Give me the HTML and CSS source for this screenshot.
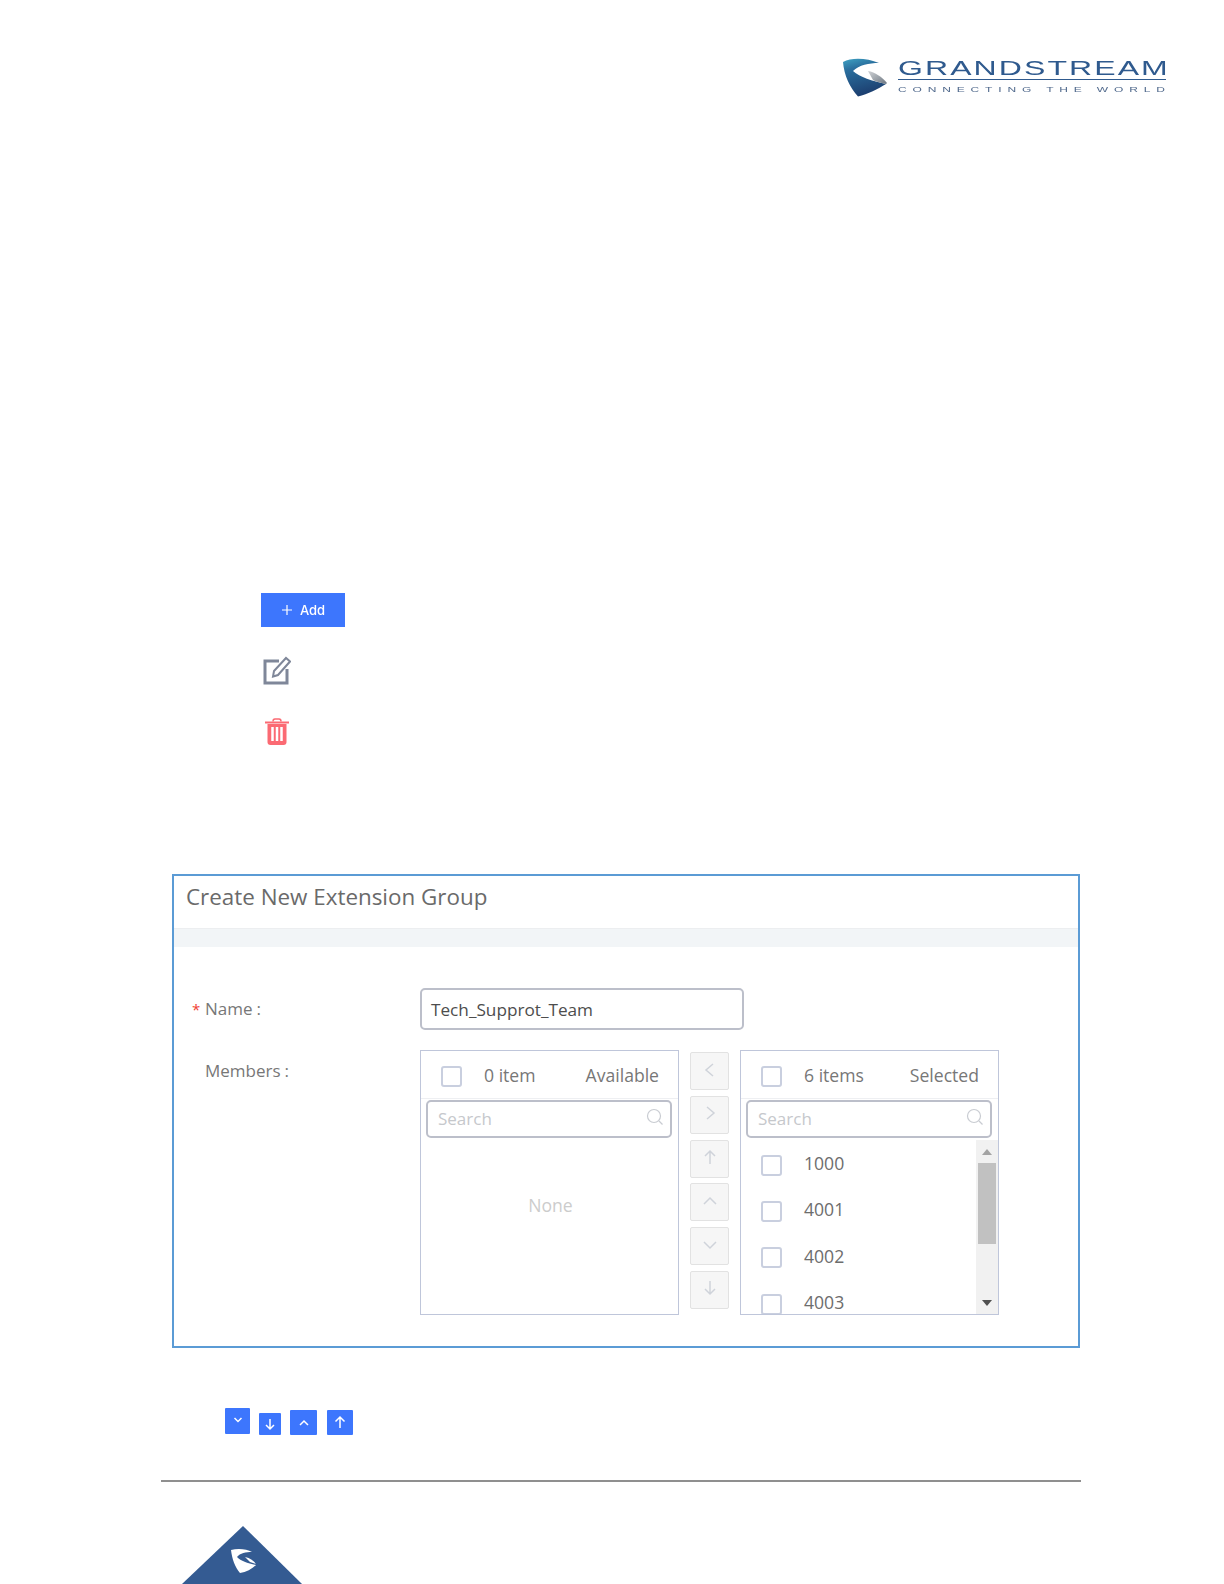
FILE: index.html
```html
<!DOCTYPE html>
<html lang="en">
<head>
<meta charset="utf-8">
<title>Create New Extension Group</title>
<link rel="stylesheet" href="styles.css">
</head>
<body>
<div class="page">
  <header class="brand">
    <svg class="brand-mark" viewBox="0 0 46 40" width="46" height="40">
      <defs>
        <linearGradient id="mk" x1="0" y1="0" x2="0.3" y2="1"><stop offset="0" stop-color="#3fa3c4"/><stop offset="0.3" stop-color="#2a6f9e"/><stop offset="1" stop-color="#1c3f70"/></linearGradient>
        <linearGradient id="mg" x1="0" y1="0" x2="1" y2="1"><stop offset="0" stop-color="#d0d3d6"/><stop offset="1" stop-color="#6b7580"/></linearGradient>
      </defs>
      <path d="M1 5C10 0 25 1 37 6 27 6 17 8 11 14 18 20 30 24 44 27 36 32 26 37 16 39.500 8 31 2 18 1 5Z" fill="url(#mk)"/>
      <path d="M26 14C33 15 40 20 45 26L44 27C38 26 33 24 31 23Z" fill="url(#mg)"/>
    </svg>
    <div class="brand-text">
      <div class="brand-name"><span>GRANDSTREAM</span></div>
      <div class="brand-rule"></div>
      <div class="brand-tag"><span>CONNECTING THE WORLD</span></div>
    </div>
  </header>

  <section class="legend">
    <button class="add-btn"><svg viewBox="0 0 12 12" width="12" height="12"><path d="M6 1v10M1 6h10" stroke="#fff" stroke-width="1.2" fill="none"/></svg><span>Add</span></button>
    <svg class="edit-icon" viewBox="0 0 28 30" width="28" height="30">
      <path d="M16 6H2v22h22V14" fill="none" stroke="#7f8799" stroke-width="3"/>
      <path d="M11 16 23 3l4 3.500L15 20l-5 1.500Z" fill="none" stroke="#7f8799" stroke-width="2"/>
    </svg>
    <svg class="trash-icon" viewBox="0 0 24 28" width="24" height="28">
      <path d="M8 3.500C8 1.500 9 1 10 1h4c1 0 2 .5 2 2.500" fill="none" stroke="#fb6a73" stroke-width="1.500"/>
      <path d="M0 4.500h24" stroke="#fb6a73" stroke-width="2"/>
      <path d="M2.500 6h19v18c0 2-1 3-3 3h-13c-2 0-3-1-3-3Z" fill="#fb6a73"/>
      <path d="M7.500 9v14M12 9v14M16.500 9v14" stroke="#fff" stroke-width="2.500"/>
    </svg>
  </section>

  <section class="panel">
    <h2 class="panel-title">Create New Extension Group</h2>
    <div class="panel-band"></div>
    <div class="panel-body">
      <div class="form-row name-row">
        <label class="form-label"><span class="req">*</span>Name<span class="colon">:</span></label>
        <div class="text-input">Tech_Supprot_Team</div>
      </div>
      <div class="form-row">
        <label class="form-label members-label">Members<span class="colon">:</span></label>
        <div class="transfer">
          <div class="list">
            <div class="list-head"><span class="check"></span><span class="count">0 item</span><span class="head-title">Available</span></div>
            <div class="search"><span>Search</span><svg viewBox="0 0 18 18" width="18" height="18"><circle cx="8" cy="8" r="6.500" fill="none" stroke="#c9ccd2" stroke-width="1.200"/><path d="M13 13l3.500 3.500" stroke="#c9ccd2" stroke-width="1.200"/></svg></div>
            <div class="empty">None</div>
          </div>
          <div class="ops">
            <span class="op"><svg viewBox="0 0 16 16" width="16" height="16"><path d="M11 2 4 8l7 6"/></svg></span>
            <span class="op"><svg viewBox="0 0 16 16" width="16" height="16"><path d="M5 2l7 6-7 6"/></svg></span>
            <span class="op"><svg viewBox="0 0 16 16" width="16" height="16"><path d="M8 15V2M3 7l5-5 5 5"/></svg></span>
            <span class="op"><svg viewBox="0 0 16 16" width="16" height="16"><path d="M2 11l6-6 6 6"/></svg></span>
            <span class="op"><svg viewBox="0 0 16 16" width="16" height="16"><path d="M2 5l6 6 6-6"/></svg></span>
            <span class="op"><svg viewBox="0 0 16 16" width="16" height="16"><path d="M8 1v13M3 9l5 5 5-5"/></svg></span>
          </div>
          <div class="list">
            <div class="list-head"><span class="check"></span><span class="count">6 items</span><span class="head-title">Selected</span></div>
            <div class="search"><span>Search</span><svg viewBox="0 0 18 18" width="18" height="18"><circle cx="8" cy="8" r="6.500" fill="none" stroke="#c9ccd2" stroke-width="1.200"/><path d="M13 13l3.500 3.500" stroke="#c9ccd2" stroke-width="1.200"/></svg></div>
            <div class="items">
              <ul class="item-list">
                <li><span class="check"></span><span class="num">1000</span></li>
                <li><span class="check"></span><span class="num">4001</span></li>
                <li><span class="check"></span><span class="num">4002</span></li>
                <li><span class="check"></span><span class="num">4003</span></li>
              </ul>
              <div class="scrollbar">
                <span class="arrow-up"></span>
                <span class="thumb"></span>
                <span class="arrow-down"></span>
              </div>
            </div>
          </div>
        </div>
      </div>
    </div>
  </section>

  <section class="mini-row">
    <span class="mini m1"><svg viewBox="0 0 12 12" width="12" height="12"><path d="M2.500 4 6 7.500 9.500 4"/></svg></span>
    <span class="mini m2"><svg viewBox="0 0 14 14" width="14" height="14"><path d="M7 2v10M3 8l4 4 4-4"/></svg></span>
    <span class="mini m3"><svg viewBox="0 0 12 12" width="12" height="12"><path d="M2 8l4-4 4 4"/></svg></span>
    <span class="mini m4"><svg viewBox="0 0 14 14" width="14" height="14"><path d="M7 13V2M2.500 6.500 7 2l4.500 4.500"/></svg></span>
  </section>

  <footer class="foot">
    <div class="foot-rule"></div>
    <svg class="foot-logo" viewBox="0 0 120 58" width="120" height="58">
      <path d="M61 0 120 58H0Z" fill="#345b92"/>
      <path d="M49 24C56 22 65 23 70 26 64 26 58 27 55 31 59 35 65 37 74 39 70 43 64 46 58 47 53 41 50 33 49 24Z" fill="#fff"/>
      <path d="M63 31C68 32 72 35 74 38L68 36Z" fill="#fff"/>
    </svg>
  </footer>
</div>
</body>
</html>
```
FILE: styles.css
```css
* { box-sizing: border-box; }
html, body { margin: 0; padding: 0; background: #fff; }
body { font-family: "Open Sans", "Noto Sans", sans-serif; color: #666; }
.page { width: 1224px; height: 1584px; overflow: hidden; }

.brand { display: flex; justify-content: flex-end; align-items: flex-start; gap: 10px; padding: 57px 58px 0 0; height: 593px; filter: blur(.4px); }
.brand-text { width: 268px; padding-top: 2px; }
.brand-name { font-family: "Liberation Sans", sans-serif; font-size: 20px; line-height: 18px; color: #2f5a8e; white-space: nowrap; }
.brand-name span { display: inline-block; letter-spacing: 1.3px; transform: scaleX(1.6); transform-origin: left top; }
.brand-rule { height: 1px; margin-top: 2px; background: #2f5a8e; }
.brand-tag { font-family: "Liberation Sans", sans-serif; font-size: 8px; line-height: 10px; margin-top: 5px; color: #50698c; white-space: nowrap; }
.brand-tag span { display: inline-block; letter-spacing: 3.9px; transform: scaleX(1.5); transform-origin: left top; }

.legend { display: flex; flex-direction: column; align-items: flex-start; padding-left: 261px; height: 281px; filter: blur(.3px); }
.add-btn { width: 84px; height: 34px; background: #3d76fd; border: 0; color: #fff; display: flex; align-items: center; justify-content: center; gap: 7px; font-family: "Inter", "Liberation Sans", sans-serif; font-size: 13px; font-weight: 500; padding: 0; }
.edit-icon { margin: 28px 0 0 2px; display: block; }
.trash-icon { margin: 33px 0 0 4px; display: block; }

.panel { margin-left: 172px; width: 908px; height: 474px; border: 2px solid #5b9bd5; background: #fff; }
.panel-title { margin: 0; height: 52px; padding: 6px 0 0 12px; font-size: 22.4px; font-weight: 400; line-height: 30px; color: #6a6a6a; }
.panel-band { height: 19px; background: #f2f5f7; border-top: 1px solid #eceef0; }
.panel-body { padding: 41px 0 0 18px; }
.form-row { display: flex; align-items: flex-start; }
.form-label { width: 228px; flex: none; display: flex; font-size: 17px; line-height: 24px; color: #777; padding-left: 13px; position: relative; }
.req { position: absolute; left: 0; color: #f04134; font-size: 15px; }
.colon { margin-left: 4px; }
.name-row { height: 62px; }
.name-row .form-label { padding-top: 9px; }
.members-label { padding-top: 9px; }
.text-input { width: 324px; height: 42px; border: 2px solid #bcbfca; border-radius: 5px; padding-left: 9px; font-size: 17.2px; line-height: 40px; color: #4d4d4d; }
.transfer { display: flex; align-items: flex-start; }
.list { width: 259px; height: 265px; border: 1px solid #bfc6da; display: flex; flex-direction: column; overflow: hidden; }
.list-head { height: 48px; flex: none; display: flex; align-items: center; padding: 0 19px 0 20px; border-bottom: 1px solid #eeeff2; font-size: 17.6px; color: #777; }
.list-head .check { margin-top: 4px; }
.check { width: 21px; height: 21px; flex: none; border: 2px solid #c9cfdf; border-radius: 3px; background: #fff; }
.count { margin-left: 22px; }
.head-title { margin-left: auto; }
.search { height: 38px; flex: none; margin: 1px 6px 0 5px; border: 2px solid #bcbfca; border-radius: 5px; display: flex; align-items: center; justify-content: space-between; padding: 0 6px 2px 10px; font-size: 17px; color: #c6c8cc; }
.search svg { margin-top: -2px; }
.empty { flex: 1; display: flex; align-items: center; justify-content: center; padding: 0 0 42px 2px; font-size: 17.6px; color: #ccc; }
.ops { width: 61px; flex: none; display: flex; flex-direction: column; align-items: center; gap: 5.800px; padding-top: 2px; }
.op { width: 39px; height: 38px; background: #f6f6f6; border: 1px solid #e2e2e2; border-radius: 2px; display: flex; align-items: center; justify-content: center; padding-bottom: 3px; }
.op svg { fill: none; stroke: #cfd3da; stroke-width: 1.500; }
.items { flex: 1; display: flex; min-height: 0; margin-top: 4px; }
.item-list { list-style: none; margin: 0; padding: 0; flex: 1; }
.item-list li { height: 46.300px; display: flex; align-items: center; padding-left: 20px; font-size: 17.6px; color: #6d6d6d; }
.num { margin-left: 22px; margin-top: -4px; }
.scrollbar { width: 22px; flex: none; background: #f1f1f1; display: flex; flex-direction: column; align-items: center; margin-top: -2px; padding-top: 9px; }
.arrow-up { width: 0; height: 0; border: 5px solid transparent; border-top: 0; border-bottom: 6px solid #a3a3a3; }
.thumb { width: 18px; height: 81px; background: #c1c1c1; margin-top: 8px; }
.arrow-down { width: 0; height: 0; border: 5px solid transparent; border-bottom: 0; border-top: 6px solid #505050; margin-top: 56px; }

.mini-row { display: flex; align-items: flex-end; padding-left: 225px; margin-top: 60px; height: 27px; filter: blur(.3px); }
.mini { display: flex; align-items: center; justify-content: center; background: #3d76fd; border-radius: 1px; }
.mini svg { fill: none; stroke: #fff; stroke-width: 1.500; }
.m1 { width: 25px; height: 26px; margin-bottom: 1px; padding-bottom: 2px; }
.m2 { width: 22px; height: 22px; margin-left: 9px; }
.m3 { width: 27px; height: 25px; margin-left: 9px; }
.m4 { width: 26px; height: 25px; margin-left: 10px; padding-bottom: 2px; }

.foot { padding: 45px 0 0 161px; }
.foot-rule { width: 920px; height: 2px; background: #8f8f8f; }
.foot-logo { display: block; margin: 44px 0 0 21px; }
```
